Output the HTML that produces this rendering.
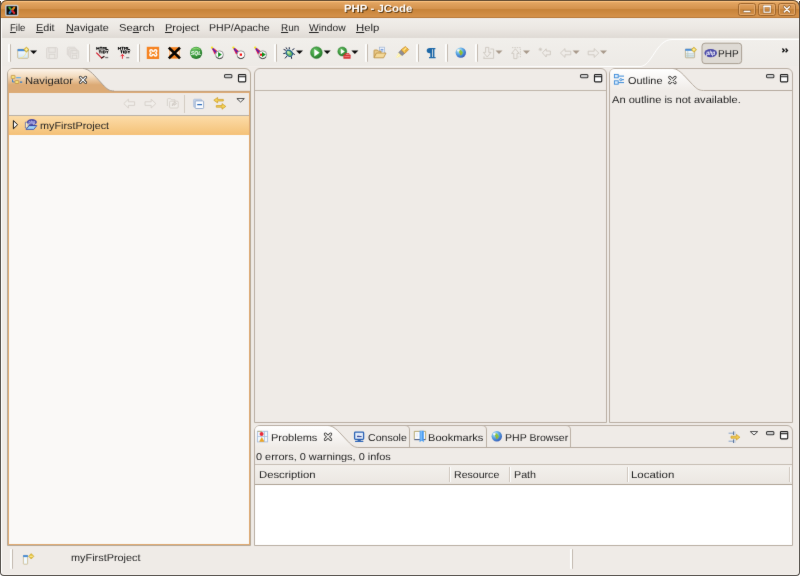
<!DOCTYPE html>
<html><head><meta charset="utf-8"><title>PHP - JCode</title>
<style>
*{margin:0;padding:0;box-sizing:border-box}
html,body{width:800px;height:576px;overflow:hidden;background:#fff}
body{text-rendering:geometricPrecision;font-family:"Liberation Sans",sans-serif;font-size:10.3px;color:#1e1e1e;position:relative}
.a{position:absolute}
#win{filter:url(#soft);will-change:transform;position:absolute;left:0;top:0;width:800px;height:576px;background:#efebe7;border-radius:7px 7px 4px 4px;overflow:hidden}
.t{position:absolute;white-space:nowrap;line-height:12px;height:12px;transform-origin:0 0}
u{text-decoration:underline;text-decoration-thickness:1px;text-underline-offset:1px}
.sep{position:absolute;width:3px;height:18px;top:44px;background:linear-gradient(90deg,#fdfdfc 0,#fdfdfc 1.6px,#c2b9af 1.6px,#c2b9af 100%);border-radius:1px}
svg{position:absolute;overflow:visible}
</style></head><body>
<svg width="0" height="0" style="position:absolute"><defs><filter id="soft" x="0" y="0" width="100%" height="100%" color-interpolation-filters="sRGB"><feConvolveMatrix order="3" kernelMatrix="0.006 0.062 0.006 0.062 0.728 0.062 0.006 0.062 0.006" edgeMode="duplicate" preserveAlpha="true"/></filter></defs></svg>
<div id="win">
<!-- TITLEBAR -->
<div class="a" id="tb" style="left:0;top:0;width:800px;height:18px;background:linear-gradient(180deg,#f3bc7c 0,#f3bc7c 2px,#e5a763 2px,#e5a763 3px,#e1a35f 3px,#d4924c 9px,#c8843a 9px,#c8843a 10px,#d5924b 17px,#b97837 17px,#b97837 18px)"></div>
<!--WINICON-->
<svg style="left:0;top:0" width="800" height="20">
<!-- window icon -->
<rect x="5.8" y="5.4" width="12" height="10" rx="1" fill="#0a0a0a" stroke="#c2c7cd" stroke-width="1.5"/>
<path d="M9.3,7.6 L11.6,10.2" stroke="#3aa635" stroke-width="2.1" stroke-linecap="round"/>
<path d="M14.2,7.6 L12,10.2" stroke="#e88a1a" stroke-width="2.1" stroke-linecap="round"/>
<path d="M9.5,13 L11.4,10.6" stroke="#1e78c8" stroke-width="2.1" stroke-linecap="round"/>
<path d="M14.2,13 L12.2,10.6" stroke="#d8262c" stroke-width="2.1" stroke-linecap="round"/>
<!-- buttons -->
<g id="wb">
<rect x="738.5" y="3.5" width="17" height="12" rx="2" fill="none" stroke="#9c642a" stroke-width="1"/>
<rect x="739.5" y="4.5" width="15" height="10" rx="1.2" fill="none" stroke="#e8b27a" stroke-opacity=".75" stroke-width="1"/>
</g>
<use href="#wb" x="20"/><use href="#wb" x="40"/>
<rect x="743.2" y="10.4" width="7.6" height="2.2" fill="#fff" stroke="#7a4a1a" stroke-width=".5"/>
<rect x="764" y="6.2" width="6.2" height="6" fill="none" stroke="#7a4a1a" stroke-width="2.2"/>
<rect x="764" y="6.2" width="6.2" height="6" fill="none" stroke="#fff" stroke-width="1.2"/>
<rect x="763.4" y="5.6" width="7.4" height="1.6" fill="#fff"/>
<path d="M784.3,6.7 L789.4,11.9 M789.4,6.7 L784.3,11.9" stroke="#7a4a1a" stroke-width="2.6" stroke-linecap="round"/>
<path d="M784.3,6.7 L789.4,11.9 M789.4,6.7 L784.3,11.9" stroke="#fff" stroke-width="1.5" stroke-linecap="round"/>
</svg>
<!--/WINICON-->
<!-- MENUBAR -->
<div class="a" style="left:1px;top:18px;width:798px;height:20px;background:linear-gradient(180deg,#f1eeea 0,#ece8e3 50%,#dfdad4 100%)"></div>
<!-- TOOLBAR -->
<div class="a" style="left:1px;top:38px;width:798px;height:28px;background:linear-gradient(180deg,#f1efeb 0,#edeae6 100%)"></div>
<svg style="left:0;top:0" width="800" height="70"><defs><linearGradient id="gcv" gradientUnits="userSpaceOnUse" x1="200" y1="0" x2="600" y2="0"><stop offset="0" stop-color="#fff" stop-opacity="0"/><stop offset="1" stop-color="#fff" stop-opacity="1"/></linearGradient></defs><path d="M150,66.5 H640 C652,66.5 656,39.5 672,39.5 H799" fill="none" stroke="url(#gcv)" stroke-width="1"/></svg>
<!--TOOLICONS-->
<div class="sep" style="left:8px"></div><div class="sep" style="left:86.5px"></div><div class="sep" style="left:137.3px"></div><div class="sep" style="left:274px"></div><div class="sep" style="left:365px"></div><div class="sep" style="left:416px"></div><div class="sep" style="left:445px"></div><div class="sep" style="left:474.5px"></div>
<svg style="left:0;top:0" width="800" height="70">
<defs>
<linearGradient id="gwin" x1="0" y1="0" x2="0" y2="1"><stop offset="0" stop-color="#fff"/><stop offset="1" stop-color="#cfe6f8"/></linearGradient>
<radialGradient id="ggr" cx=".4" cy=".35" r=".7"><stop offset="0" stop-color="#6cc46a"/><stop offset=".6" stop-color="#3a9a3c"/><stop offset="1" stop-color="#226e28"/></radialGradient>
<radialGradient id="ggl" cx=".35" cy=".3" r=".8"><stop offset="0" stop-color="#d4effc"/><stop offset=".45" stop-color="#58a8e4"/><stop offset="1" stop-color="#2c4cb0"/></radialGradient>
<path id="dd" d="M0,0 H7 L3.5,3.6 Z"/>
<g id="feather"><path d="M0,0.2 L6.4,4.6 L3.4,7.6 Z" fill="#e4124c"/><path d="M1.2,1.3 L5.2,5.8" stroke="#4a22b8" stroke-width="1.5"/><path d="M2.4,1.5 L6.2,4.6" stroke="#f02838" stroke-width=".9"/><circle cx=".7" cy=".6" r="1.15" fill="#f8e818"/><circle cx="8.2" cy="7.7" r="3.9" fill="#fff" stroke="#8a8a8a" stroke-width=".9"/><path d="M4.9,9.7 A3.9,3.9 0 0 0 11.5,9.9" fill="none" stroke="#444" stroke-width="1"/></g>
</defs>
<!-- new -->
<rect x="17.7" y="49.3" width="10.6" height="9" rx=".8" fill="url(#gwin)" stroke="#c8b88c" stroke-width=".9"/>
<rect x="17.6" y="49" width="10.8" height="2.2" fill="#4a8cd4"/>
<path d="M20,58 C24,57.5 26,55 26.4,51" fill="none" stroke="#f6e490" stroke-width=".9"/>
<path d="M26.4,47 L29,49.6 L26.4,52.2 L23.8,49.6 Z" fill="#e8c43a" stroke="#b8941a" stroke-width=".5"/>
<path d="M26.4,48.2 V51 M25,49.6 H27.8" stroke="#fff6c0" stroke-width=".8"/>
<use href="#dd" x="30.1" y="50.4" fill="#0a0a0a"/>
<!-- save disabled -->
<g fill="#e8e5e1" stroke="#d9d5d0" stroke-width=".9">
<rect x="46.6" y="47.6" width="10.8" height="11" rx="1"/><rect x="48.8" y="47.8" width="6.4" height="4.4" fill="#e9e6e2"/><rect x="49.2" y="54.4" width="5.6" height="4" fill="#ebe8e4"/>
<rect x="67.3" y="47.2" width="8" height="8" rx="1"/><rect x="68.8" y="48.8" width="8" height="8" rx="1"/><rect x="70.3" y="50.4" width="8.4" height="8.2" rx="1"/><rect x="72" y="50.6" width="5" height="2.8" fill="#e9e6e2"/><rect x="72.4" y="55.2" width="4.2" height="3.2" fill="#ebe8e4"/>
</g>
<!-- html tidy -->
<path d="M96.80,47.0 V49.8 M99.00,47.0 V49.8 M96.80,48.40 H99.00 M99.90,47.30 H102.10 M101.00,47.0 V49.8 M103.00,49.8 V47.0 L104.10,48.50 L105.20,47.0 V49.8 M106.10,47.0 V49.50 H108.30 M98.80,50.90 H101.00 M99.90,50.6 V53.4 M101.90,50.6 V53.4 M103.30,50.6 V53.4 M103.30,50.90 H104.35 Q105.40,50.90 105.40,52.00 Q105.40,53.10 104.35,53.10 H103.30 M106.20,50.6 L107.30,52.00 L108.40,50.6 M107.30,52.00 V53.4 M118.40,47.0 V49.8 M120.60,47.0 V49.8 M118.40,48.40 H120.60 M121.50,47.30 H123.70 M122.60,47.0 V49.8 M124.60,49.8 V47.0 L125.70,48.50 L126.80,47.0 V49.8 M127.70,47.0 V49.50 H129.90 M120.40,50.90 H122.60 M121.50,50.6 V53.4 M123.50,50.6 V53.4 M124.90,50.6 V53.4 M124.90,50.90 H125.95 Q127.00,50.90 127.00,52.00 Q127.00,53.10 125.95,53.10 H124.90 M127.80,50.6 L128.90,52.00 L130.00,50.6 M128.90,52.00 V53.4" fill="none" stroke="#0c0c0c" stroke-width="1"/>
<path d="M96.3,52.6 L102,58.3" stroke="#d01020" stroke-width="1.1"/><path d="M101.2,58.3 L104.4,56.2" stroke="#2a0a0a" stroke-width="1.3"/><rect x="105.2" y="56.9" width="3" height="1.3" fill="#777"/>
<path d="M122.4,58.8 V54.6 M120.7,56.2 L122.4,54.4 L124.1,56.2" fill="none" stroke="#e81020" stroke-width=".9"/><rect x="126.2" y="57" width="3" height="1.3" fill="#888"/>
<!-- xampp -->
<rect x="146.8" y="46.8" width="12.3" height="12.2" fill="#f6821f"/>
<g fill="#fff"><circle cx="151.1" cy="51.1" r="2"/><circle cx="155.5" cy="51.1" r="2"/><circle cx="151.1" cy="54.8" r="2"/><circle cx="155.5" cy="54.8" r="2"/><rect x="150.3" y="50.6" width="6" height="4.7"/></g><g fill="#f6902f"><circle cx="151.2" cy="51.3" r=".75"/><circle cx="155.4" cy="51.3" r=".75"/><circle cx="151.2" cy="54.6" r=".75"/><circle cx="155.4" cy="54.6" r=".75"/><rect x="151.4" y="51.9" width="3.8" height="2.1"/></g>
<!-- X -->
<rect x="168" y="46.8" width="12.6" height="12.2" fill="#fbf2e8"/><rect x="169" y="47.2" width="10.6" height="11.4" fill="#f6821f"/>
<path d="M169.4,50.6 L172.6,52.9 L169.4,55.2 Z M179.4,50.6 L176.2,52.9 L179.4,55.2 Z" fill="#fdeee0"/><path d="M168.8,47.6 L180,58.4 M180,47.6 L168.8,58.4" stroke="#050505" stroke-width="2.7"/>
<!-- sql -->
<circle cx="196.1" cy="52.9" r="6.1" fill="url(#ggr)"/><path d="M192.4,49.2 Q196,46.8 200,49.4" fill="none" stroke="#9adf70" stroke-width=".9"/>
<text x="190.8" y="55.2" font-family="Liberation Sans" font-weight="bold" font-style="italic" font-size="5.6" fill="#fff" textLength="10.6" lengthAdjust="spacingAndGlyphs">SQL</text>
<!-- feathers -->
<use href="#feather" x="211.3" y="47"/><path d="M218.1,52 L221.8,54.6 L218.1,57.3 Z" fill="#0f8a1c"/>
<use href="#feather" x="232.7" y="47"/><rect x="239.7" y="53.5" width="2.3" height="2.3" fill="#f01010"/>
<use href="#feather" x="254.5" y="47"/><rect x="260" y="53.6" width="2.2" height="2.2" fill="#f01010"/><path d="M262,52 L265.8,54.6 L262,57.3 Z" fill="#0f8a1c"/>
<!-- debug bug -->
<g stroke="#14203c" stroke-width="1" fill="none"><path d="M286.2,50.4 L283.6,49.4 M285.6,53.2 L283.3,53.6 M287,56 L285,58.4 M289.4,49.2 L289.2,47.2 M292.2,50 L294.4,48.6 M292.8,53.4 L294.8,54.6 M291.4,56.4 L291.6,58.8 M287.2,49.4 L286,47.4"/></g>
<ellipse cx="289.3" cy="53.3" rx="3.4" ry="2.7" transform="rotate(40 289.3 53.3)" fill="#74be64" stroke="#1c5f8c" stroke-width="1.1"/><ellipse cx="288.4" cy="52.4" rx="1.6" ry="1.1" transform="rotate(40 288.4 52.4)" fill="#c8eab0"/>
<use href="#dd" x="296" y="50.5" fill="#0a0a0a"/>
<!-- run -->
<circle cx="316.4" cy="52.7" r="5.9" fill="url(#ggr)" stroke="#2a7a2c" stroke-width=".5"/><path d="M314.3,49 L319.6,52.7 L314.3,56.6 Z" fill="#fff"/>
<use href="#dd" x="323.7" y="50.5" fill="#0a0a0a"/>
<!-- run ext -->
<circle cx="342.3" cy="51.5" r="4.5" fill="url(#ggr)" stroke="#2a7a2c" stroke-width=".5"/><path d="M340.8,48.8 L344.8,51.5 L340.8,54.3 Z" fill="#fff"/>
<rect x="343.4" y="54.6" width="7.2" height="4.2" rx=".6" fill="#d83434"/><path d="M345,54.6 V53.6 H349 V54.6" fill="none" stroke="#d83434" stroke-width=".9"/><path d="M344.4,56.6 H349.6" stroke="#f4a0a0" stroke-width=".7"/>
<use href="#dd" x="351.4" y="50.5" fill="#0a0a0a"/>
<!-- open folder -->
<rect x="379.4" y="47.2" width="5.2" height="6.6" fill="#f4f8ff" stroke="#9ab0d0" stroke-width=".7"/><path d="M380.6,49.4 H383.4 M380.6,51 H383.4" stroke="#4a7ac8" stroke-width=".8"/>
<path d="M374,57.6 V50.6 Q374,50 374.8,50 H377.4 L378.4,51.2 H381 V53" fill="#e8c888" stroke="#b88a3a" stroke-width=".8"/>
<path d="M374,57.8 L376.4,53 H386 L383.6,57.8 Z" fill="#f4d898" stroke="#b88a3a" stroke-width=".8"/>
<!-- flashlight -->
<path d="M395.8,58.2 L398.6,52.6 L401.8,55.8 Z" fill="#fdf0a0"/><path d="M396.6,57.6 L399.6,54" stroke="#fff8d0" stroke-width="1"/>
<path d="M398.8,52.4 L402,55.6 L404.6,53.4 L401.2,50 Z" fill="#8e8e96" stroke="#5c5c66" stroke-width=".5"/>
<path d="M401.2,49.8 L404.8,53.4 L408.6,49.6 L405.4,46.6 Z" fill="#f8cc58" stroke="#c8821a" stroke-width=".8"/><path d="M403.6,50.2 L406.4,47.8" stroke="#fde9a0" stroke-width="1"/><path d="M405,51.4 L407.4,49.2" stroke="#b87414" stroke-width=".7"/>
<!-- pilcrow -->
<path d="M431.6,47.9 H435.4 V49.2 H434.4 V57 H435.6 V58.3 H429 V57 H430.3 V53.2 H429.8 Q426.7,53.2 426.7,50.5 Q426.7,47.9 429.8,47.9 Z M432,49.2 V57 H432.8 V49.2 Z" fill="#1d68a8" fill-rule="evenodd"/>
<!-- globe -->
<circle cx="460.8" cy="52.6" r="5.2" fill="url(#ggl)"/><path d="M459.4,49.4 Q461.6,49.8 462.2,51.6 Q463.6,52.4 462.4,53.8 Q461.4,55.6 460.4,55.4 Q460,53.4 459,52.2 Q458.4,50.4 459.4,49.4 Z" fill="#8ac43a"/><path d="M460.2,53 Q461.6,53.4 461,55 Q460.2,55.2 460.2,53 Z" fill="#d8782a"/><ellipse cx="458.4" cy="50.4" rx="1.5" ry="1.1" fill="#fff" fill-opacity=".8"/>
<!-- disabled nav -->
<g fill="#efece8" stroke="#cdc7c0" stroke-width=".9">
<path d="M485.6,47.4 H488.8 V52.4 H491 L487.2,57 L483.4,52.4 H485.6 Z"/><path d="M490.4,49 H493.6 V58.4 H483.4 M484,58.4 V56.4" fill="none"/>
<path d="M513.8,58.6 H517 V53.4 H519.2 L515.4,48.8 L511.6,53.4 H513.8 Z"/><path d="M512,47.6 H520.4 V57 H518.4" fill="none" stroke-dasharray="1.4 1"/>
<path d="M542.4,52.8 L546.2,48.8 V51 H550.4 V54.8 H546.2 V57 Z"/><path d="M540.4,47.6 V51.2 M538.6,49.4 H542.2 M539.2,48.2 L541.6,50.6 M541.6,48.2 L539.2,50.6" fill="none" stroke-width=".7"/>
<path d="M560.4,53 L565,48.6 V51.2 H570.8 V54.8 H565 V57.4 Z"/>
<path d="M598.8,53 L594.2,48.6 V51.2 H588.2 V54.8 H594.2 V57.4 Z"/>
</g>
<g fill="#a8998a"><use href="#dd" x="495.5" y="50.5"/><use href="#dd" x="523" y="50.5"/><use href="#dd" x="572.6" y="50.5"/><use href="#dd" x="600" y="50.5"/></g>
<!-- open perspective -->
<rect x="685.4" y="49.2" width="9.2" height="8.6" rx=".6" fill="url(#gwin)" stroke="#c0b08c" stroke-width=".9"/><rect x="685.2" y="48.8" width="9.6" height="2" fill="#4a8cd4"/>
<path d="M687.8,51 V57.6 M685.6,53.8 H694.4 M685.6,55.8 H694.4" stroke="#b8c4b4" stroke-width=".7"/>
<path d="M693.9,47.1 L696.6,49.7 L693.9,52.3 L691.2,49.7 Z" fill="#e8c43a" stroke="#b8941a" stroke-width=".5"/><path d="M693.9,48.3 V51.1 M692.5,49.7 H695.3" stroke="#fff6c0" stroke-width=".8"/>
<!-- PHP button -->
<rect x="702" y="43.2" width="39.6" height="20.4" rx="3" fill="#dedad4" stroke="#a89e92" stroke-width="1"/>
<ellipse cx="710.7" cy="53.1" rx="6.3" ry="4.1" fill="#4a4aa8"/>
<text x="706.3" y="55" font-family="Liberation Sans" font-style="italic" font-weight="bold" font-size="6.4" fill="#fff" textLength="8.8" lengthAdjust="spacingAndGlyphs">php</text>
<!-- chevron -->
<path d="M782.4,48.6 L784.2,50.4 L782.4,52.2 M785.6,48.6 L787.4,50.4 L785.6,52.2" fill="none" stroke="#111" stroke-width="1.4"/>
</svg>
<!--/TOOLICONS-->
<!-- NAVIGATOR -->
<div class="a" style="left:7px;top:68px;width:244px;height:478px;border:1px solid #b5a999;border-radius:6px 6px 0 0;background:#efebe7"></div>
<div class="a" style="left:8px;top:91px;width:242px;height:454px;border:1px solid #dfa970;border-top:0;background:#faf9f7"></div>
<svg style="left:0;top:0" width="260" height="100"><defs><linearGradient id="go" x1="0" y1="0" x2="0" y2="1"><stop offset="0" stop-color="#fdf5ea"/><stop offset=".3" stop-color="#f3dcc0"/><stop offset=".66" stop-color="#dcaa75"/><stop offset="1" stop-color="#dcaa75"/></linearGradient></defs>
<path d="M8,93 V74 Q8,69 13,69 H83 C87,69 91,72.00 96,77.50 L103,85.00 C107,89.00 109,91 114,91 H250 V93 Z" fill="url(#go)"/>
<path d="M83,68.5 C87,68.5 91,71.57 96,77.19 L103,84.86 C107,88.95 109,91 114,91" fill="none" stroke="#a69a8e" stroke-width="1"/><path d="M113.5,91.3 H250" stroke="#bf9e7c" stroke-width=".8"/></svg>
<div class="a" style="left:9px;top:93px;width:240px;height:22px;background:#efebe7"></div>
<div class="a" style="left:9px;top:115px;width:240px;height:1px;background:#b9b0a6"></div>
<div class="a" style="left:9px;top:116px;width:240px;height:19px;background:linear-gradient(180deg,#fcdca8 0,#f4c177 100%)"></div>
<div class="a" style="left:184px;top:95px;width:1px;height:18px;background:#d3cbc2"></div>

<!-- EDITOR -->
<div class="a" style="left:254px;top:68px;width:353px;height:355px;border:1px solid #b9aea3;border-radius:6px 6px 0 0"></div>
<div class="a" style="left:255px;top:90px;width:351px;height:1px;background:#bfb5aa"></div>
<!--EDICONS-->
<!-- OUTLINE -->
<div class="a" style="left:609px;top:68px;width:184px;height:355px;border:1px solid #b9aea3;border-radius:6px 6px 0 0"></div>
<svg style="left:0;top:0" width="800" height="100"><defs><linearGradient id="gw" x1="0" y1="0" x2="0" y2="1"><stop offset="0" stop-color="#fff"/><stop offset="1" stop-color="#efebe7"/></linearGradient></defs>
<path d="M610,91 V74 Q610,69 615,69 H672.5 C676.5,69 680.5,71.93 685.5,77.31 L692.5,84.64 C696.5,88.55 698.5,90.5 703.5,90.5 V91 Z" fill="url(#gw)"/>
<path d="M672.5,68.5 C676.5,68.5 680.5,71.50 685.5,77.00 L692.5,84.50 C696.5,88.50 698.5,90.5 703.5,90.5 H792" fill="none" stroke="#b6ab9f" stroke-width="1"/></svg>
<!--OUTICONS-->
<!-- BOTTOM -->
<div class="a" style="left:254px;top:425px;width:539px;height:121px;border:1px solid #b9aea3;border-radius:6px 6px 0 0"></div>
<svg style="left:0;top:357px" width="800" height="100">
<path d="M255,91 V74 Q255,69 260,69 H328 C332,69 336,71.93 341,77.31 L348,84.64 C352,88.55 354,90.5 359,90.5 V91 Z" fill="url(#gw)"/>
<path d="M328,68.5 C332,68.5 336,71.50 341,77.00 L348,84.50 C352,88.50 354,90.5 359,90.5 H792" fill="none" stroke="#b6ab9f" stroke-width="1"/>
<path d="M405,68.5 Q409.5,68.5 409.5,73 V90 M482,68.5 Q486.5,68.5 486.5,73 V90 M566,68.5 Q570.5,68.5 570.5,73 V90" fill="none" stroke="#bbb0a5" stroke-width="1"/></svg>
<!-- table -->
<div class="a" style="left:255px;top:464px;width:537px;height:1px;background:#c6bdb3"></div>
<div class="a" style="left:255px;top:465px;width:537px;height:19px;background:linear-gradient(180deg,#f3f0ec 0,#ebe7e2 100%)"></div>
<div class="a" style="left:255px;top:484px;width:537px;height:1px;background:#aea396"></div>
<div class="a" style="left:255px;top:485px;width:537px;height:60px;background:#fff"></div>
<div class="a" style="left:449px;top:467px;width:2px;height:15px;background:linear-gradient(90deg,#cfc7be 50%,#fff 50%)"></div>
<div class="a" style="left:509px;top:467px;width:2px;height:15px;background:linear-gradient(90deg,#cfc7be 50%,#fff 50%)"></div>
<div class="a" style="left:627px;top:467px;width:2px;height:15px;background:linear-gradient(90deg,#cfc7be 50%,#fff 50%)"></div>
<div class="a" style="left:789px;top:467px;width:2px;height:15px;background:linear-gradient(90deg,#cfc7be 50%,#fff 50%)"></div>
<!--BOTICONS-->
<!-- STATUS -->
<div class="a" style="left:10px;top:549px;width:3px;height:20px;background:linear-gradient(90deg,#fdfdfc 0,#fdfdfc 1.6px,#c2b9af 1.6px);border-radius:1px"></div>
<div class="a" style="left:570px;top:549px;width:3px;height:20px;background:linear-gradient(90deg,#fdfdfc 0,#fdfdfc 1.6px,#c2b9af 1.6px);border-radius:1px"></div>
<!--ICONS-->
<svg style="left:0;top:0" width="800" height="576">
<defs>
<g id="cx"><path d="M-2.7,-2.7 L2.7,2.7 M2.7,-2.7 L-2.7,2.7" stroke="#222" stroke-width="2.8" stroke-linecap="round"/><path d="M-2.7,-2.7 L2.7,2.7 M2.7,-2.7 L-2.7,2.7" stroke="#fff" stroke-width="1.3" stroke-linecap="round"/></g>
<g id="cxo"><path d="M-2.7,-2.7 L2.7,2.7 M2.7,-2.7 L-2.7,2.7" stroke="#1c1c1c" stroke-width="2.9" stroke-linecap="round"/><path d="M-2.7,-2.7 L2.7,2.7 M2.7,-2.7 L-2.7,2.7" stroke="#f4f2ef" stroke-width="1.5" stroke-linecap="round"/></g>
<g id="mn"><rect x=".5" y=".5" width="7.4" height="3.2" rx="1" fill="#d0d0d0" stroke="#3a3a3a" stroke-width="1.05"/></g>
<g id="mx"><rect x=".5" y=".5" width="7.2" height="7.3" rx=".8" fill="#fff" stroke="#1e1e1e" stroke-width="1.15"/><rect x="1" y="1" width="6.2" height="1.2" fill="#c4c4c4"/><path d="M.5,2.7 H7.7" stroke="#1e1e1e" stroke-width="1.1"/></g>
<path id="vm" d="M0.3,0.2 H7.7 L4,3.6 Z" fill="#fff" stroke="#3a3a3a" stroke-width=".95" stroke-linejoin="round"/>
</defs>
<!-- Navigator tab icon -->
<rect x="11.2" y="75.4" width="3.8" height="3.2" rx=".5" fill="#f8e27c" stroke="#b8863a" stroke-width=".7"/>
<path d="M16.2,77.6 H20.8" stroke="#6aaee4" stroke-width="1.3"/>
<path d="M12.5,79.2 V81.9 H14.6" fill="none" stroke="#3a80c8" stroke-width="1"/>
<rect x="15" y="80.6" width="3.8" height="2.9" rx=".5" fill="#f8e27c" stroke="#b8863a" stroke-width=".7"/>
<path d="M20,82.2 H22.2" stroke="#2a78c8" stroke-width="1.3"/>
<use href="#cx" x="83" y="79.9"/>
<use href="#mn" x="224" y="74"/><use href="#mx" x="238" y="74"/>
<!-- nav toolbar -->
<g fill="#f1eeea" stroke="#d5cfc8" stroke-width=".9">
<path d="M123.8,103.6 L128.4,99.2 V101.8 H134.6 V105.4 H128.4 V108 Z"/>
<path d="M155.8,103.6 L151.2,99.2 V101.8 H145 V105.4 H151.2 V108 Z"/>
<path d="M167.4,106 V99.4 Q167.4,98.6 168.2,98.6 H170.6 L171.6,99.8 H175 V101.4"/><rect x="169.6" y="101.2" width="8.6" height="6.8" rx="1"/><path d="M172.2,106 Q171.6,103 174.4,102.8 V101.6 L176.6,103.6 L174.4,105.4 V104.4 Q173,104.4 172.2,106 Z" fill="#dedad5" stroke="#c9c3bc" stroke-width=".6"/>
</g>
<rect x="193.6" y="99.2" width="8" height="8" rx=".8" fill="#c4d4ea" stroke="#a8bcd8" stroke-width=".7"/>
<rect x="195.2" y="100.9" width="8.4" height="7.6" rx=".8" fill="#fcfdff" stroke="#8ea6c8" stroke-width=".9"/>
<path d="M197.2,104.7 H202" stroke="#2a6ab8" stroke-width="1.3"/>
<path d="M213.8,100.2 L217.6,97.5 V99.4 H223.3 V101 H217.6 V102.9 Z" fill="#f6d458" stroke="#c8961c" stroke-width=".7"/>
<path d="M225.8,106.4 L222,103.6 V105.6 H216.3 V107.2 H222 V109.2 Z" fill="#f6d458" stroke="#c8961c" stroke-width=".7"/>
<use href="#vm" x="236.6" y="98.4"/>
<!-- tree -->
<path d="M13.4,120.6 L17.6,124.7 L13.4,128.8 Z" fill="#fff" stroke="#111" stroke-width="1" stroke-linejoin="round"/>
<path d="M25.4,122.2 H28.2 V128 H25.4 Z" fill="#fbf0c0" stroke="#4a58a8" stroke-width=".7"/>
<path d="M26,129.4 L29.2,125.6 H36.8 L33.8,129.4 Z" fill="#9cd2f8" stroke="#3a50a8" stroke-width=".9" stroke-linejoin="round"/>
<path d="M29,125.4 H35.6" stroke="#3a44a0" stroke-width="1.2"/>
<ellipse cx="31.9" cy="122" rx="5" ry="3" fill="#4a4aa8"/>
<text x="28.6" y="123.6" font-family="Liberation Sans" font-style="italic" font-weight="bold" font-size="5" fill="#d8d8ff" textLength="6.6" lengthAdjust="spacingAndGlyphs">php</text>
<!-- editor min/max -->
<use href="#mn" x="580" y="74"/><use href="#mx" x="594" y="74"/>
<!-- outline -->
<g fill="#dcecfc" stroke="#3a8ad8" stroke-width=".9"><rect x="614.4" y="74.4" width="3.8" height="3.4"/><rect x="614.4" y="80.8" width="3.8" height="3.4"/><circle cx="620.8" cy="79.7" r="1.1"/></g>
<path d="M618.4,76.1 H624 M622,79.7 H624 M618.4,82.6 H624" stroke="#3a8ad8" stroke-width="1"/>
<use href="#cxo" x="672.4" y="80"/>
<use href="#mn" x="766" y="74"/><use href="#mx" x="780" y="74"/>
<!-- problems icon -->
<rect x="257.4" y="431.3" width="10.2" height="10.6" fill="#f2fafe" stroke="#a8bede" stroke-width=".9"/>
<path d="M257.4,436.5 H267.6 M264.5,431.3 V441.9" stroke="#a8bede" stroke-width=".8"/>
<path d="M257.6,431.4 H262" stroke="#b8b078" stroke-width=".9"/>
<circle cx="261.6" cy="434.1" r="2" fill="#e82838"/>
<path d="M261.8,437.6 L264,441.4 H259.6 Z" fill="#f0a820" stroke="#e09010" stroke-width=".5" stroke-linejoin="round"/>
<use href="#cxo" x="328" y="436.8"/>
<!-- console -->
<rect x="354.6" y="432.1" width="9" height="7.2" rx=".8" fill="#e2ecfa" stroke="#2a62b4" stroke-width="1.3"/>
<path d="M357,436.6 H361.6" stroke="#2a3c90" stroke-width="1"/><path d="M357.2,435.4 H359.4" stroke="#9aa8d0" stroke-width=".8"/>
<rect x="357.6" y="439.6" width="3.2" height="1.3" fill="#2458a8"/><rect x="355" y="440.8" width="8.4" height="1.1" rx=".5" fill="#2e66b8"/>
<!-- bookmarks -->
<path d="M414.3,431.4 H425.6 V439.4 H414.3 Z" fill="#fbfcfe"/>
<path d="M414.3,439.4 V431.4 H425.6 V439.4" fill="none" stroke="#b0a264" stroke-width=".9"/>
<path d="M414.3,439.6 H425.6" stroke="#4a5a80" stroke-width="1.1"/><path d="M416,434 H418 M416,436 H418" stroke="#d0d8e8" stroke-width=".7"/>
<path d="M419.6,430.8 H423.8 V442.3 L421.7,440.4 L419.6,442.3 Z" fill="#4a9cf0"/><path d="M421.2,431 V440" stroke="#86c4fa" stroke-width="1.2"/>
<!-- globe -->
<circle cx="496.8" cy="436.3" r="5.2" fill="url(#ggl)"/><path d="M495.4,433.1 Q497.6,433.5 498.2,435.3 Q499.6,436.1 498.4,437.5 Q497.4,439.3 496.4,439.1 Q496,437.1 495,435.9 Q494.4,434.1 495.4,433.1 Z" fill="#8ac43a"/><path d="M496.2,436.7 Q497.6,437.1 497,438.7 Q496.2,438.9 496.2,436.7 Z" fill="#d8782a"/><ellipse cx="494.4" cy="434.1" rx="1.5" ry="1.1" fill="#fff" fill-opacity=".8"/>
<!-- filter -->
<path d="M728.6,433.2 H733 M728.6,441.2 H733" stroke="#7a9cc8" stroke-width=".9"/><path d="M733.6,431.4 V435 M733.6,439.4 V443" stroke="#4a6a98" stroke-width="1"/><path d="M735,431.6 V434.8 M735,439.6 V442.8" stroke="#a8bcd8" stroke-width=".8"/>
<path d="M731,436.2 H736.4 V434.4 L739.9,437.2 L736.4,440 V438.2 H731 Z" fill="#f4cc50" stroke="#c89a20" stroke-width=".7"/>
<use href="#vm" x="750" y="431.4"/>
<use href="#mn" x="766" y="431"/><use href="#mx" x="780" y="431"/>
<!-- status icon -->
<rect x="23.4" y="555.4" width="4.2" height="8.8" rx=".5" fill="#f2fafe" stroke="#c8b88c" stroke-width=".8"/><rect x="23.1" y="555.1" width="4.8" height="2" fill="#4a8cd4"/>
<path d="M31.2,553.6 L33.9,556.3 L31.2,559 L28.5,556.3 Z" fill="#e8c43a" stroke="#b8941a" stroke-width=".5"/><path d="M29.6,556.3 H32.8" stroke="#fff6c0" stroke-width=".8"/>
</svg>
<!--/ICONS-->
<!--TEXT-->
<div class="t" style="left:344.23px;top:3px;font-size:10.5px;transform:scaleX(1.0872);color:#fff;font-weight:bold;text-shadow:1px 1px 0 #5a3a14;">PHP - JCode</div>
<div class="t" style="left:10.25px;top:23px;font-size:10.0px;transform:scaleX(0.9534);"><u>F</u>ile</div>
<div class="t" style="left:36.25px;top:23px;font-size:10.0px;transform:scaleX(1.0792);"><u>E</u>dit</div>
<div class="t" style="left:65.5px;top:23px;font-size:10.0px;transform:scaleX(1.0853);"><u>N</u>avigate</div>
<div class="t" style="left:119.1px;top:23px;font-size:10.0px;transform:scaleX(1.1231);">Se<u>a</u>rch</div>
<div class="t" style="left:165px;top:23px;font-size:10.0px;transform:scaleX(1.1035);"><u>P</u>roject</div>
<div class="t" style="left:209.12px;top:23px;font-size:10.0px;transform:scaleX(1.0603);">PHP/Apache</div>
<div class="t" style="left:280.5px;top:23px;font-size:10.0px;transform:scaleX(0.9921);"><u>R</u>un</div>
<div class="t" style="left:308.75px;top:23px;font-size:10.0px;transform:scaleX(1.0277);"><u>W</u>indow</div>
<div class="t" style="left:355.5px;top:23px;font-size:10.0px;transform:scaleX(1.1328);"><u>H</u>elp</div>
<div class="t" style="left:25.07px;top:76px;font-size:10.0px;transform:scaleX(1.1201);">Navigator</div>
<div class="t" style="left:39.51px;top:121px;font-size:10.0px;transform:scaleX(1.0816);">myFirstProject</div>
<div class="t" style="left:627.95px;top:76px;font-size:10.0px;transform:scaleX(1.0875);">Outline</div>
<div class="t" style="left:612.13px;top:95px;font-size:10.0px;transform:scaleX(1.1085);">An outline is not available.</div>
<div class="t" style="left:271.49px;top:433px;font-size:10.0px;transform:scaleX(1.0977);">Problems</div>
<div class="t" style="left:368.42px;top:433px;font-size:10.0px;transform:scaleX(1.0568);">Console</div>
<div class="t" style="left:428.08px;top:433px;font-size:10.0px;transform:scaleX(1.1077);">Bookmarks</div>
<div class="t" style="left:504.88px;top:433px;font-size:10.0px;transform:scaleX(1.0553);">PHP Browser</div>
<div class="t" style="left:256.13px;top:452px;font-size:10.0px;transform:scaleX(1.0927);">0 errors, 0 warnings, 0 infos</div>
<div class="t" style="left:258.81px;top:470px;font-size:10.0px;transform:scaleX(1.1313);">Description</div>
<div class="t" style="left:453.62px;top:470px;font-size:10.0px;transform:scaleX(1.058);">Resource</div>
<div class="t" style="left:513.71px;top:470px;font-size:10.0px;transform:scaleX(1.0721);">Path</div>
<div class="t" style="left:630.8px;top:470px;font-size:10.0px;transform:scaleX(1.1443);">Location</div>
<div class="t" style="left:70.75px;top:553px;font-size:10.0px;transform:scaleX(1.088);">myFirstProject</div>
<div class="t" style="left:717.87px;top:49px;font-size:10.0px;transform:scaleX(1.0017);">PHP</div>
<!--/TEXT-->
<!-- inner highlight -->
<div class="a" style="left:1px;top:18px;width:1px;height:557px;background:#fbfaf9"></div>
</div>
<!-- frame borders -->
<div class="a" style="left:0;top:0;width:800px;height:576px;border:1px solid #5c5853;border-top-color:#6b5236;border-radius:7px 7px 4px 4px;pointer-events:none"></div>
<div class="a" style="left:0;top:1px;width:1px;height:17px;background:#5e4a36"></div>
<div class="a" style="left:799px;top:1px;width:1px;height:17px;background:#5e4a36"></div>
</body></html>
